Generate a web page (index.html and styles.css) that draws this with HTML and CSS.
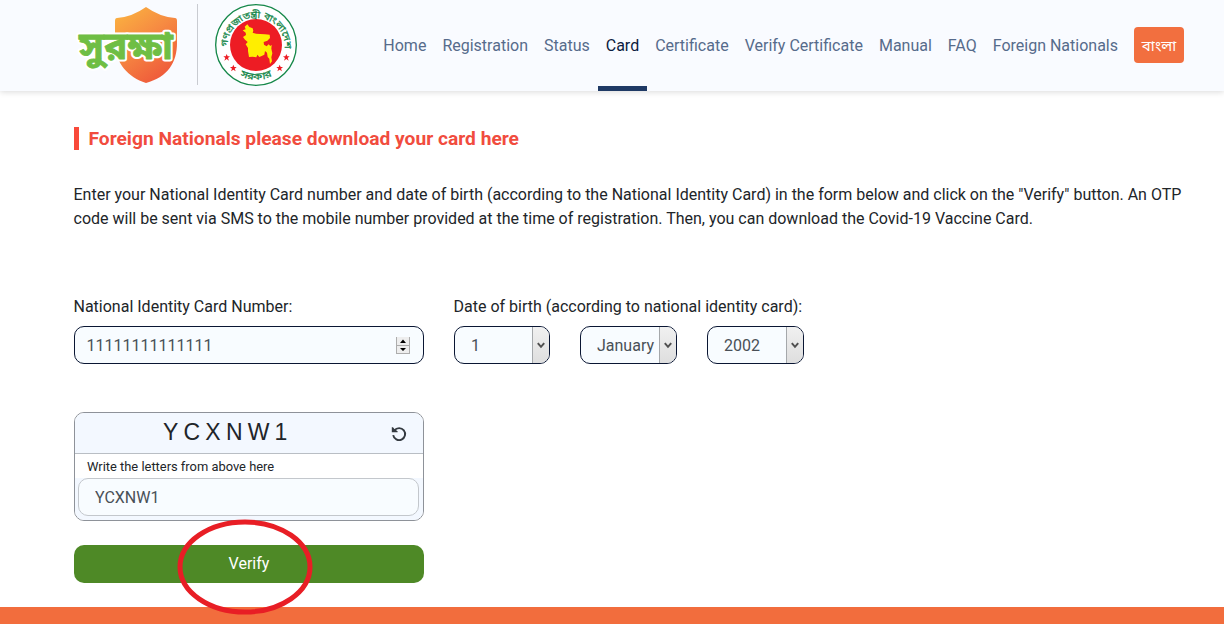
FILE: index.html
```html
<!DOCTYPE html>
<html lang="en">

<head>
    <meta charset="UTF-8">
    <meta name="viewport" content="width=device-width, initial-scale=1.0">
    <title>Surokkha</title>
    <link rel="stylesheet" href="styles.css">
</head>

<body>
    <header class="navbar">
        <div class="brand">
            <svg class="logo" width="110" height="91" viewBox="0 0 110 91">
                <defs>
                    <linearGradient id="shield" x1="0" y1="0" x2="0.6" y2="1">
                        <stop offset="0" stop-color="#fbb740"/>
                        <stop offset="0.5" stop-color="#f68b42"/>
                        <stop offset="1" stop-color="#ef5c3b"/>
                    </linearGradient>
                </defs>
                <path d="M72 7 Q86 17 101 18 Q103 18 103 21 V43 C103 62 94 77 72 83 C54 77 42 64 41 44 V21 Q41 18 43 18 Q58 17 72 7Z" fill="url(#shield)"/>
                <text class="logo-text" x="5" y="59" textLength="94" lengthAdjust="spacingAndGlyphs">সুরক্ষা</text>
                <text class="logo-text fill" x="5" y="59" textLength="94" lengthAdjust="spacingAndGlyphs">সুরক্ষা</text>
            </svg>
            <span class="divider"></span>
            <svg class="seal" width="82" height="82" viewBox="15 12 246 246">
                <defs>
                    <path id="arcTop" d="M52 140 A86 86 0 1 1 224 140"/>
                    <path id="arcBottom" d="M33 134 A105 105 0 0 0 243 134"/>
                </defs>
                <circle cx="138" cy="135" r="121" fill="#fff" stroke="#16884a" stroke-width="4"/>
                <circle cx="138" cy="135" r="78" fill="#ed1c24"/>
                <path d="M98 91 L107 88 L104 80 L112 73 L118 81 L128 85 L130 92 L128 98 L138 101 L150 102 L165 103 L179 104 L180 114 L172 122 L161 126 L162 134 L170 139 L176 133 L181 138 L185 134 L184 146 L187 160 L184 172 L186 184 L180 192 L178 176 L173 171 L171 158 L165 153 L163 164 L155 168 L148 171 L142 164 L139 172 L128 170 L117 171 L114 153 L114 144 L107 133 L113 126 L105 119 L99 111 L108 105 L107 98Z" fill="#ffee00"/>
                <g fill="#16884a" class="seal-text">
                    <text><textPath href="#arcTop" textLength="276" lengthAdjust="spacingAndGlyphs">গণপ্রজাতন্ত্রী বাংলাদেশ</textPath></text>
                    <text text-anchor="middle"><textPath href="#arcBottom" startOffset="50%" textLength="100" lengthAdjust="spacingAndGlyphs">সরকার</textPath></text>
                </g>
                <g fill="#ed1c24">
                    <path id="star" d="M50 162 L53 169 L60 169 L54 174 L57 182 L50 177 L43 182 L46 174 L40 169 L47 169Z"/>
                    <use href="#star" x="20" y="32"/>
                    <use href="#star" x="159" y="32"/>
                    <use href="#star" x="179"/>
                </g>
            </svg>
        </div>
        <nav class="menu">
            <a class="link">Home</a>
            <a class="link">Registration</a>
            <a class="link">Status</a>
            <a class="link active">Card</a>
            <a class="link">Certificate</a>
            <a class="link">Verify Certificate</a>
            <a class="link">Manual</a>
            <a class="link">FAQ</a>
            <a class="link">Foreign Nationals</a>
            <button class="lang">বাংলা</button>
        </nav>
    </header>

    <main class="container">
        <h1 class="title">Foreign Nationals please download your card here</h1>
        <p class="intro">Enter your National Identity Card number and date of birth (according to the National Identity Card) in the form below and click on the "Verify" button. An OTP code will be sent via SMS to the mobile number provided at the time of registration. Then, you can download the Covid-19 Vaccine Card.</p>

        <form class="form">
            <div class="row">
                <div class="field">
                    <label for="nid">National Identity Card Number:</label>
                    <div class="box">
                        <input id="nid" type="text" value="11111111111111">
                        <svg class="spinner" width="14" height="17" viewBox="0 0 14 17">
                            <rect width="14" height="17" fill="#adadad"/>
                            <rect x="1" y="0" width="12" height="8" fill="#eee"/>
                            <rect x="1" y="9" width="12" height="7" fill="#eee"/>
                            <path d="M4 6 L7 2.6 L10 6Z M4 11 L7 14 L10 11Z"/>
                        </svg>
                    </div>
                </div>
                <div class="field">
                    <label>Date of birth (according to national identity card):</label>
                    <div class="dates">
                        <div class="box">
                            <select><option>1</option></select>
                            <span class="arrow"><svg width="8" height="7" viewBox="0 0 8 7"><path d="M0.8 1.2 L4 4.8 L7.2 1.2"/></svg></span>
                        </div>
                        <div class="box">
                            <select><option>January</option></select>
                            <span class="arrow"><svg width="8" height="7" viewBox="0 0 8 7"><path d="M0.8 1.2 L4 4.8 L7.2 1.2"/></svg></span>
                        </div>
                        <div class="box">
                            <select><option>2002</option></select>
                            <span class="arrow"><svg width="8" height="7" viewBox="0 0 8 7"><path d="M0.8 1.2 L4 4.8 L7.2 1.2"/></svg></span>
                        </div>
                    </div>
                </div>
            </div>

            <div class="captcha">
                <div class="captcha-top">
                    <span class="code">YCXNW1</span>
                    <svg class="reload" width="16" height="16" viewBox="0 0 16 16">
                        <path d="M3.4 4.4 A6 6 0 1 1 2.2 9.2" fill="none" stroke="#343a40" stroke-width="1.9"/>
                        <path d="M0.8 1.2 L2 1.2 L3.4 3 L6.6 5.2 V6.2 H0.8Z" fill="#343a40"/>
                    </svg>
                </div>
                <label class="hint" for="captcha">Write the letters from above here</label>
                <div class="captcha-bottom">
                    <input id="captcha" type="text" value="YCXNW1">
                </div>
            </div>

            <div class="submit">
                <button class="verify" type="button">Verify</button>
                <svg class="ring" width="136" height="96" viewBox="0 0 136 96">
                    <ellipse cx="68" cy="48" rx="65" ry="45"/>
                </svg>
            </div>
        </form>
    </main>

    <footer class="footer"></footer>
</body>

</html>
```
FILE: styles.css
```css
* {
    box-sizing: border-box;
}

body {
    margin: 0;
    height: 624px;
    overflow: hidden;
    display: flex;
    flex-direction: column;
    background: #fff;
    color: #212529;
    font: 16px/24px Roboto, "Noto Sans", sans-serif;
}

.navbar {
    display: flex;
    justify-content: space-between;
    height: 91px;
    flex: none;
    padding: 0 40px 0 74px;
    background: #f9fbff;
    box-shadow: 0 1px 6px rgba(0, 0, 0, 0.15);
}

.brand {
    display: flex;
}

.logo-text {
    font: bold 38px "Noto Sans Bengali", "Noto Sans", sans-serif;
    fill: #fff;
    stroke: #fff;
    stroke-width: 5px;
    stroke-linejoin: round;
}

.logo-text.fill {
    fill: #6fbe44;
    stroke: #6fbe44;
    stroke-width: 0.8px;
}

.divider {
    width: 1px;
    height: 81px;
    margin: 4px 17px 0 13px;
    background: #c9cbd1;
}

.seal {
    margin-top: 4px;
}

.seal-text {
    font: 28px "Noto Sans Bengali", "Noto Sans", sans-serif;
    stroke: #16884a;
    stroke-width: 0.8px;
}

.menu {
    display: flex;
    align-items: flex-start;
}

.link {
    height: 91px;
    padding: 34px 8px 0;
    color: #566b8b;
}

.link.active {
    color: #0c1c40;
    border-bottom: 5px solid #1f3a65;
}

.lang {
    width: 50px;
    height: 36px;
    margin: 27px 0 0 8px;
    padding: 3px 0 0;
    border: 0;
    border-radius: 4px;
    background: #f26f3f;
    color: #fff;
    font: 15px "Noto Sans Bengali", "Noto Sans", sans-serif;
}

.container {
    flex: 1;
    padding: 36px 40px 0 74px;
}

.title {
    margin: 0 0 33px;
    padding-left: 9.5px;
    border-left: 5px solid #f9493a;
    color: #f14c3e;
    font-size: 19.2px;
    line-height: 23px;
    font-weight: 700;
}

.intro {
    margin: 0 0 64px -0.5px;
}

.row {
    display: grid;
    grid-template-columns: 350px 350px;
    gap: 30px;
}

.field label {
    display: block;
    margin: 0 0 7px -0.5px;
}

.box {
    display: flex;
    align-items: center;
    height: 38px;
    border: 1px solid #0a1633;
    border-radius: 10px;
    background: #f8fcff;
    overflow: hidden;
}

input,
select {
    flex: 1;
    min-width: 0;
    height: 100%;
    border: 0;
    outline: 0;
    background: none;
    color: #495057;
    font: 16px Roboto, sans-serif;
    appearance: none;
}

.box input {
    padding: 0 11.5px;
}

.spinner {
    margin-right: 13px;
}

.dates {
    display: grid;
    grid-template-columns: 96px 97px 97px;
    justify-content: space-between;
}

.box select {
    padding: 0 0 0 16px;
}

.arrow {
    display: flex;
    align-items: center;
    justify-content: center;
    width: 17px;
    height: 100%;
    border-left: 1px solid #a5a8ab;
    background: linear-gradient(#f0f0f0, #dedede);
}

.arrow path {
    fill: none;
    stroke: #505050;
    stroke-width: 2;
}

.captcha {
    width: 350px;
    height: 109px;
    margin-top: 48px;
    border: 1px solid #8e9299;
    border-radius: 10px;
    background: #fff;
    overflow: hidden;
}

.captcha-top {
    display: flex;
    align-items: center;
    height: 41px;
    padding: 0 16px 0 88px;
    justify-content: space-between;
    border-bottom: 1px solid #b9bec4;
    background: #f3f8ff;
}

.code {
    margin-top: -2px;
    color: #212529;
    font: 23px "Liberation Sans", sans-serif;
    letter-spacing: 5.2px;
}

.reload {
    margin-top: 1px;
}

.hint {
    display: block;
    height: 24px;
    padding-left: 12px;
    font-size: 12.9px;
    line-height: 25px;
}

.captcha-bottom {
    display: flex;
    height: 42px;
    padding: 0 4px 4px 3px;
    background: #f3f8ff;
}

.captcha-bottom input {
    padding: 0 16px;
    border: 1px solid #c3c7cc;
    border-radius: 10px;
    background: #f8fcff;
}

.submit {
    position: relative;
    width: 350px;
    margin-top: 24px;
}

.verify {
    display: block;
    width: 100%;
    height: 38px;
    padding: 0 0 2px;
    border: 0;
    border-radius: 10px;
    background: #4e8926;
    color: #fff;
    font: 16px Roboto, sans-serif;
}

/* red ring round the button */
.ring {
    position: absolute;
    left: 102.5px;
    top: -26.5px;
}

.ring ellipse {
    fill: none;
    stroke: #e81e25;
    stroke-width: 5;
}

.footer {
    flex: none;
    height: 17px;
    background: #f26d3d;
}
```
